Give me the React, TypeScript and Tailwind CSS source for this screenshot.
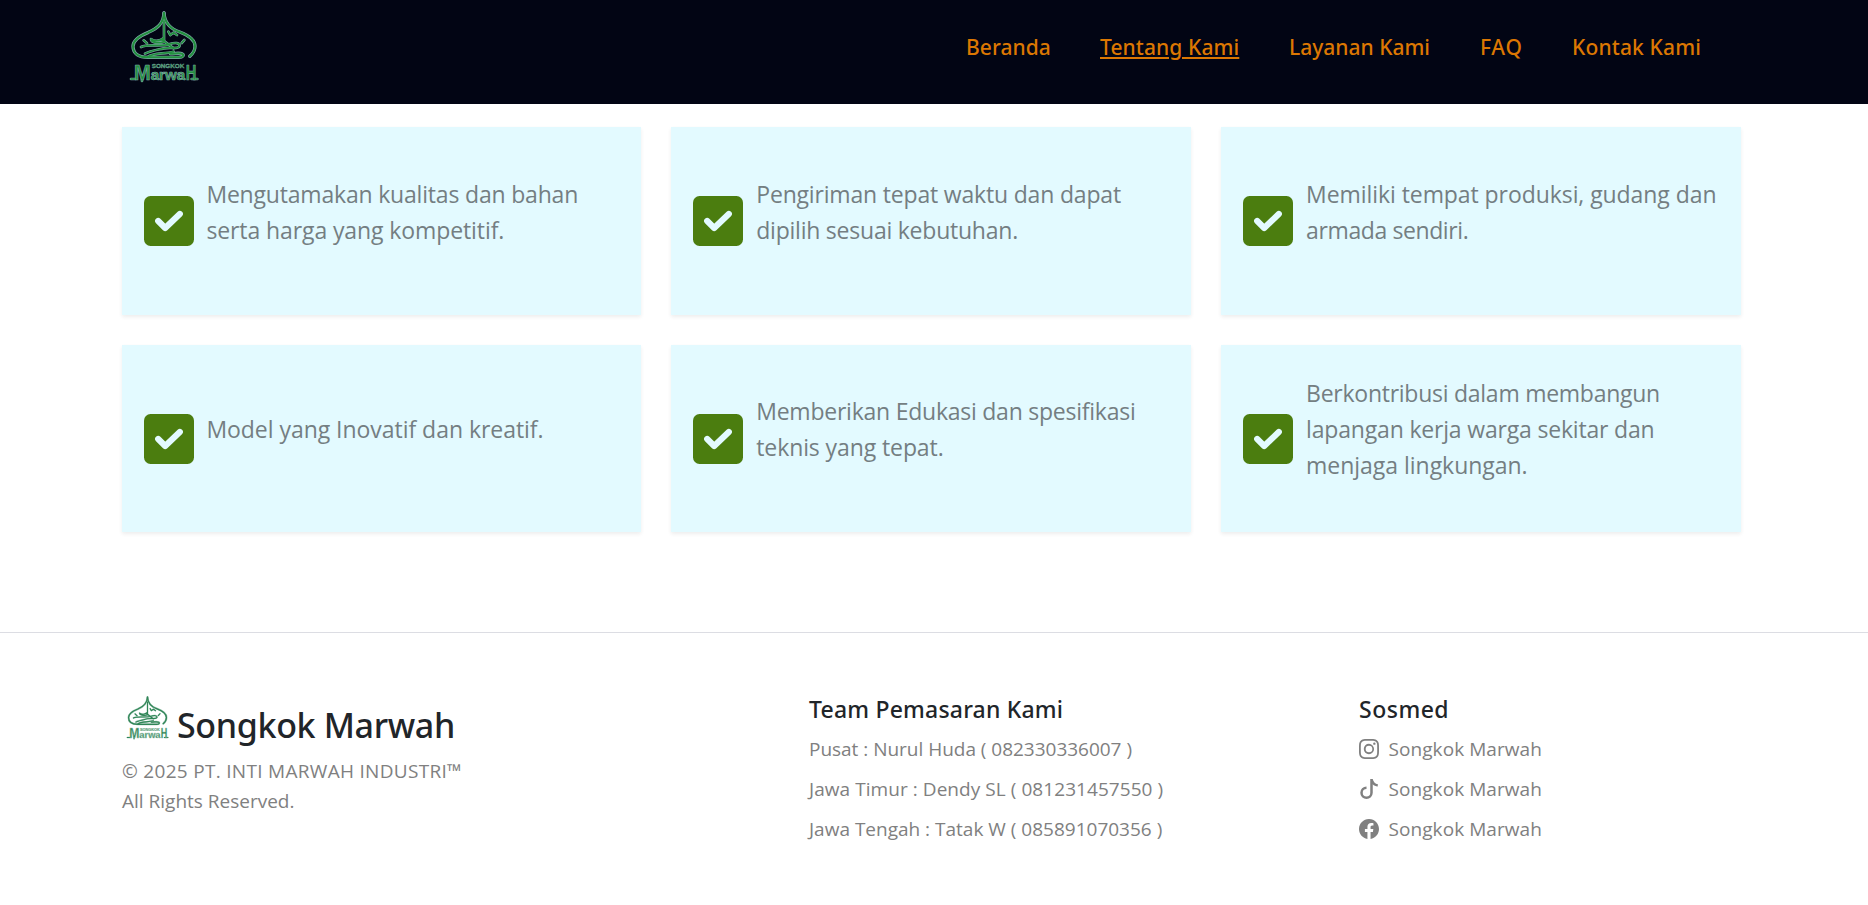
import { BsInstagram, BsTiktok, BsFacebook } from "react-icons/bs";
import type { ReactNode } from "react";

const navLinks = [
  { label: "Beranda", style: "w-[84px] tracking-[0.05px]", active: false },
  { label: "Tentang Kami", style: "w-[139px] tracking-[0.1px]", active: true },
  { label: "Layanan Kami", style: "w-[141px]", active: false },
  { label: "FAQ", style: "w-[42px] tracking-[0.7px]", active: false },
  { label: "Kontak Kami", style: "w-[130px] tracking-[0.15px]", active: false },
];

const advantages: { text: string; tracking: string }[][] = [
  [
    { text: "Mengutamakan kualitas dan bahan", tracking: "tracking-[-0.19px]" },
    { text: "serta harga yang kompetitif.", tracking: "tracking-[-0.1px]" },
  ],
  [
    { text: "Pengiriman tepat waktu dan dapat", tracking: "tracking-[-0.18px]" },
    { text: "dipilih sesuai kebutuhan.", tracking: "tracking-[-0.23px]" },
  ],
  [
    { text: "Memiliki tempat produksi, gudang dan", tracking: "tracking-[-0.07px]" },
    { text: "armada sendiri.", tracking: "tracking-[-0.4px]" },
  ],
  [{ text: "Model yang Inovatif dan kreatif.", tracking: "tracking-[-0.04px]" }],
  [
    { text: "Memberikan Edukasi dan spesifikasi", tracking: "tracking-[-0.24px]" },
    { text: "teknis yang tepat.", tracking: "tracking-[-0.1px]" },
  ],
  [
    { text: "Berkontribusi dalam membangun", tracking: "tracking-[-0.26px]" },
    { text: "lapangan kerja warga sekitar dan", tracking: "tracking-[-0.18px]" },
    { text: "menjaga lingkungan.", tracking: "tracking-[-0.03px]" },
  ],
];

const contacts = [
  { text: "Pusat : Nurul Huda ( 082330336007 )", tracking: "tracking-[-0.02px]" },
  { text: "Jawa Timur : Dendy SL ( 081231457550 )", tracking: "tracking-[0.06px]" },
  { text: "Jawa Tengah : Tatak W ( 085891070356 )", tracking: "tracking-[0px]" },
];

const socials: { icon: ReactNode; label: string }[] = [
  { icon: <BsInstagram size={20} />, label: "Songkok Marwah" },
  { icon: <BsTiktok size={20} />, label: "Songkok Marwah" },
  { icon: <BsFacebook size={20} />, label: "Songkok Marwah" },
];

function Dome() {
  return (
    <>
      <path d="M161 36C159 68 142 82 114 94C84 106 68 118 68 136C68 158 86 169 112 169H206C218 169 222 162 216 159C208 154 196 158 180 158" />
      <path d="M161 36C163 68 182 84 208 93C238 104 254 118 254 136C254 150 248 158 238 166" />
    </>
  );
}

function Calligraphy() {
  return (
    <>
      <path d="M161 60V122C146 128 122 126 122 114C136 124 152 118 158 112" />
      <path d="M174 92L180 102L190 95L200 102M100 118L110 127M214 126L222 117" />
      <path d="M92 138C112 128 150 138 176 130C196 123 208 126 208 134C206 146 182 138 160 142C138 147 118 150 104 158" />
      <path d="M154 116C168 124 176 132 190 142M112 168C130 154 160 160 190 152" />
    </>
  );
}

function Logo({ className, line, edge }: { className: string; line: string; edge: string }) {
  return (
    <svg viewBox="56 30 210 216" className={`overflow-visible ${className}`} fill="none" strokeLinecap="round" strokeLinejoin="round" role="img">
      <g stroke={edge} strokeWidth="10">
        <Dome />
      </g>
      <g stroke={edge} strokeWidth="8">
        <Calligraphy />
      </g>
      <g stroke={line} strokeWidth="6">
        <Dome />
      </g>
      <g stroke={line} strokeWidth="5">
        <Calligraphy />
      </g>
      {/* ground strokes and droplet beside the word mark */}
      <path d="M62 234H76M244 234H261M95 228V240" stroke={edge} strokeWidth="8" />
      <path d="M62 234H76M244 234H261M95 228V240" stroke={line} strokeWidth="5" />
      <g fill={line} stroke={edge} strokeWidth="2" fontWeight="700" fontFamily="Liberation Sans, sans-serif">
        <text x="71" y="236" fontSize="68" textLength="50" lengthAdjust="spacingAndGlyphs">
          M
        </text>
        <text x="121" y="236" fontSize="46" textLength="104" lengthAdjust="spacingAndGlyphs">
          arwa
        </text>
        <text x="226" y="236" fontSize="68" textLength="32" lengthAdjust="spacingAndGlyphs">
          H
        </text>
        <text x="124" y="202" fontSize="18" strokeWidth="1" textLength="98" lengthAdjust="spacingAndGlyphs">
          SONGKOK
        </text>
      </g>
    </svg>
  );
}

function CheckBadge() {
  return (
    <svg viewBox="0 0 50 50" className="mt-px size-[50px] shrink-0" fill="none">
      <rect width="50" height="50" rx="6.5" fill="#4b7d0f" />
      <path d="M14.2 25L21.2 32L35.8 18" stroke="#e3faff" strokeWidth="6.2" strokeLinecap="round" strokeLinejoin="round" />
    </svg>
  );
}

export default function App() {
  return (
    <div className="flex h-[905px] flex-col overflow-hidden bg-white font-['Open_Sans',sans-serif] text-[19px] leading-[30px] text-[#808080]">
      <header className="flex h-[104px] shrink-0 bg-[#020514] pl-[129px]">
        <Logo className="mt-[10.5px] h-[72px] w-[70px]" line="#23903f" edge="#7fa9a8" />
        <nav className="ml-[767px] mt-8 flex gap-[50px] font-['Noto_Sans',sans-serif] text-[21px] font-medium leading-[30px] text-[#dc7702]">
          {navLinks.map((l) => (
            <a
              key={l.label}
              className={`${l.style} h-[30px] whitespace-nowrap ${l.active ? "underline decoration-2 underline-offset-2" : ""}`}
            >
              {l.label}
            </a>
          ))}
        </nav>
      </header>

      <main className="ml-[121.6px] mt-[23.2px] grid w-[1619.6px] grid-cols-3 gap-[30px]">
        {advantages.map((lines) => (
          <article key={lines[0].text} className="flex h-[187.5px] items-center gap-[12.8px] bg-[#e3faff] pl-[22px] shadow-[0_2px_4px_rgba(0,0,0,0.075)]">
            <CheckBadge />
            <p className="mb-[18px] whitespace-nowrap text-[23px] leading-9 text-[#747e82]">
              {lines.map((line) => (
                <span key={line.text} className={`block ${line.tracking}`}>
                  {line.text}
                </span>
              ))}
            </p>
          </article>
        ))}
      </main>

      <footer className="mt-[99.8px] flex border-t border-[#dcdde3] pl-[122px] pt-[61px]">
        <section className="w-[687px]">
          <div className="flex pl-[4px] pt-[2px]">
            <Logo className="h-[44px] w-[43px]" line="#2f8555" edge="#9cc4b2" />
            <h2 className="ml-[8px] mt-[8px] font-['Noto_Sans',sans-serif] text-[34px] font-medium leading-[42px] tracking-[-0.35px] text-[#212529]">
              Songkok Marwah
            </h2>
          </div>
          <p className="mt-[10.5px] tracking-[0.3px]">© 2025 PT. INTI MARWAH INDUSTRI™</p>
          <p>All Rights Reserved.</p>
        </section>
        <section className="w-[550px]">
          <h3 className="font-['Noto_Sans',sans-serif] text-[23px] font-medium tracking-[0.2px] text-[#212529]">Team Pemasaran Kami</h3>
          <ul className="mt-[5.3px]">
            {contacts.map((c) => (
              <li key={c.text} className={`h-10 leading-10 ${c.tracking}`}>
                {c.text}
              </li>
            ))}
          </ul>
        </section>
        <section>
          <h3 className="font-['Noto_Sans',sans-serif] text-[23px] font-medium tracking-[0.5px] text-[#212529]">Sosmed</h3>
          <ul className="mt-[5.3px]">
            {socials.map((s, i) => (
              <li key={i} className="flex h-10 items-center gap-[9.5px] leading-10">
                {s.icon}
                <span className="tracking-[0.07px]">{s.label}</span>
              </li>
            ))}
          </ul>
        </section>
      </footer>
    </div>
  );
}
